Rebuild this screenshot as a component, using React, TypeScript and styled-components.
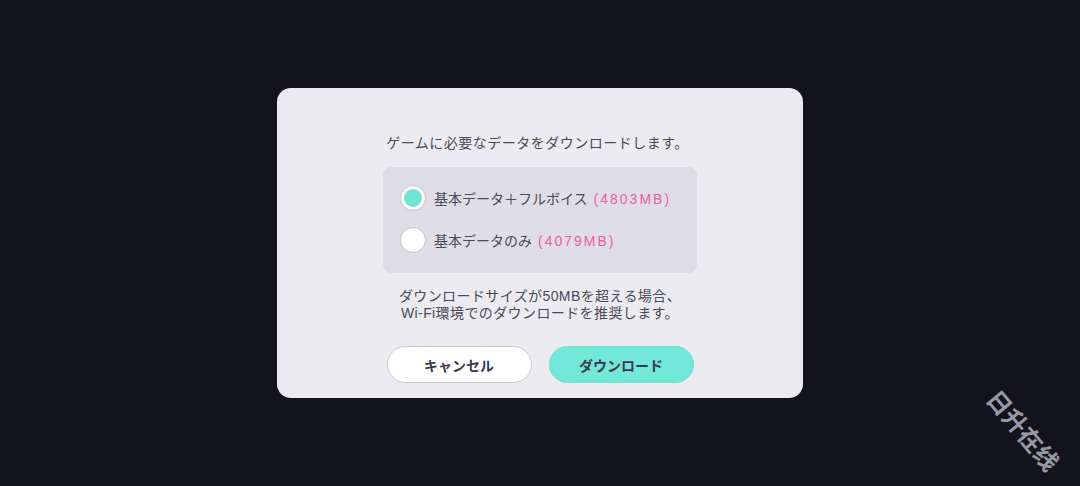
import React, { useState } from 'react';
import styled, { createGlobalStyle } from 'styled-components';

const GlobalStyle = createGlobalStyle`
    html, body {
        margin: 0;
        padding: 0;
        background-color: #13131c;
    }
    body {
        font-family: "Liberation Sans", "Noto Sans CJK JP", sans-serif;
    }
`;

export const Screen = styled.div`
    width: 100%;
    height: 486px;
    display: flex;
    align-items: center;
    justify-content: center;
    position: relative;
    overflow: hidden;
`;

export const Dialog = styled.div`
    width: 526px;
    height: 310px;
    box-sizing: border-box;
    background-color: #ebebf0;
    border-radius: 14px;
    padding: 45px 0 0;
    display: flex;
    flex-direction: column;
    align-items: center;
`;

export const Message = styled.div`
    color: #4a4a58;
    font-size: 14px;
    line-height: 20px;
    letter-spacing: 0.5px;
    margin-right: 5px;
`;

export const OptionBox = styled.div`
    width: 314px;
    height: 106px;
    box-sizing: border-box;
    margin-top: 14px;
    padding: 18px 0 0 17px;
    background-color: #dfdee7;
    border-radius: 8px;
    display: flex;
    flex-direction: column;
    gap: 16px;
`;

export const OptionRow = styled.label`
    display: flex;
    align-items: center;
    gap: 8px;
    height: 26px;
    cursor: pointer;
    color: #4a4a58;
    font-size: 14px;
`;

export const Radio = styled.span<{ $checked: boolean }>`
    width: 26px;
    height: 26px;
    box-sizing: border-box;
    border-radius: 50%;
    background-color: #fff;
    border: 1px solid #c4c4cc;
    display: flex;
    align-items: center;
    justify-content: center;

    &::after {
        content: "";
        width: 18px;
        height: 18px;
        border-radius: 50%;
        background-color: ${p => (p.$checked ? '#74e3d4' : 'transparent')};
    }
`;

export const Size = styled.span`
    color: #ec5c9c;
    margin-left: 6px;
    letter-spacing: 2px;
`;

export const Note = styled.div`
    margin-top: 15px;
    color: #4a4a58;
    font-size: 14px;
    text-align: center;
    letter-spacing: 0.4px;
`;

export const NoteLine = styled.div`
    height: 17px;
    line-height: 17px;
`;

export const Buttons = styled.div`
    margin-top: 24px;
    display: flex;
    gap: 17px;
`;

export const Button = styled.button<{ $primary?: boolean }>`
    width: 145px;
    height: 37px;
    border-radius: 19px;
    border: 1px solid ${p => (p.$primary ? '#6ee0d0' : '#c9c9d0')};
    background-color: ${p => (p.$primary ? '#74e8d8' : '#ffffff')};
    color: #3a3a4c;
    font-family: "Noto Sans CJK JP", sans-serif;
    font-size: 14px;
    font-weight: 700;
    cursor: pointer;
    padding: 0;
`;

export const Watermark = styled.div`
    position: absolute;
    left: 976px;
    top: 412px;
    color: #9898a2;
    font-size: 24px;
    font-weight: 700;
    transform: rotate(50deg);
    font-family: "Noto Sans CJK SC", sans-serif;
    white-space: nowrap;
`;

const options = [
    { label: '基本データ＋フルボイス', size: '4803MB' },
    { label: '基本データのみ', size: '4079MB' },
];

function App() {
    const [selected, setSelected] = useState(0);

    return (
        <>
            <GlobalStyle />
            <Screen>
                <Dialog>
                    <Message>ゲームに必要なデータをダウンロードします。</Message>
                    <OptionBox>
                        {options.map((o, i) => (
                            <OptionRow key={o.label} onClick={() => setSelected(i)}>
                                <Radio $checked={selected === i} />
                                <span>
                                    {o.label}
                                    <Size>({o.size})</Size>
                                </span>
                            </OptionRow>
                        ))}
                    </OptionBox>
                    <Note>
                        <NoteLine>ダウンロードサイズが50MBを超える場合、</NoteLine>
                        <NoteLine>Wi-Fi環境でのダウンロードを推奨します。</NoteLine>
                    </Note>
                    <Buttons>
                        <Button>キャンセル</Button>
                        <Button $primary>ダウンロード</Button>
                    </Buttons>
                </Dialog>
                <Watermark>日升在线</Watermark>
            </Screen>
        </>
    );
}

export default App;
